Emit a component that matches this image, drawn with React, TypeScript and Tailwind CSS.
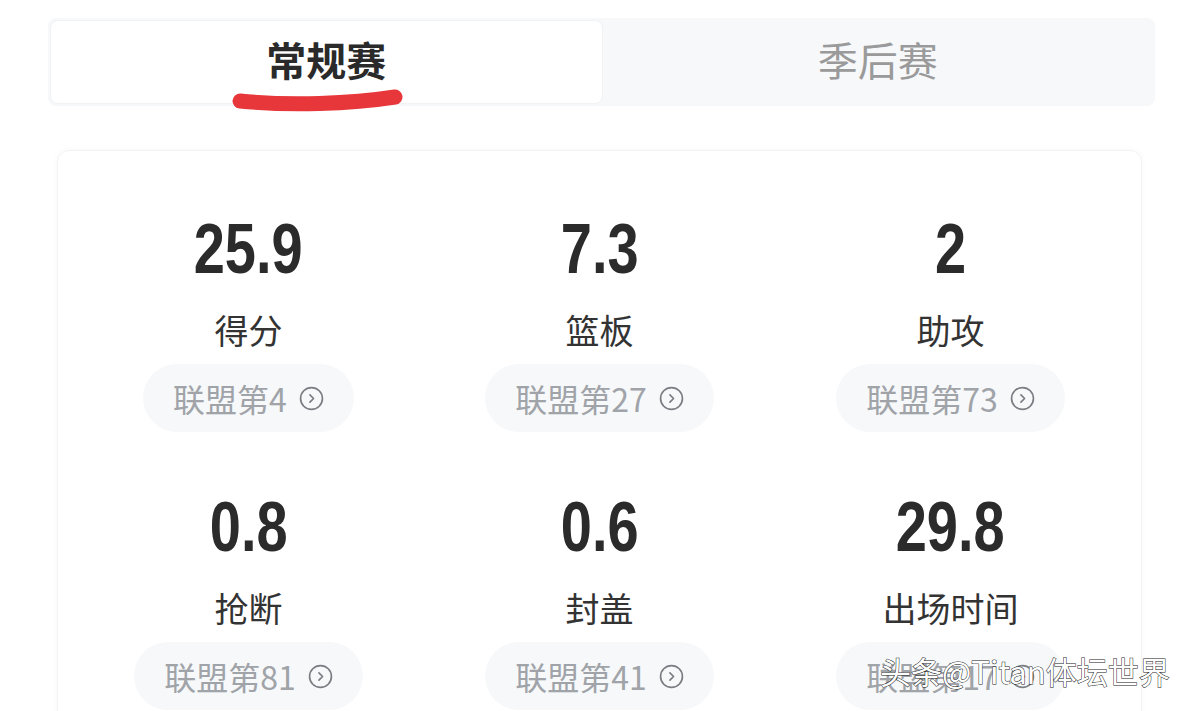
import React from "react";

type Stat = { value: string; label: string; rank: string };

const stats: Stat[] = [
  { value: "25.9", label: "得分", rank: "联盟第4" },
  { value: "7.3", label: "篮板", rank: "联盟第27" },
  { value: "2", label: "助攻", rank: "联盟第73" },
  { value: "0.8", label: "抢断", rank: "联盟第81" },
  { value: "0.6", label: "封盖", rank: "联盟第41" },
  { value: "29.8", label: "出场时间", rank: "联盟第17" },
];

const cjk = "font-['Noto_Sans_CJK_SC','Noto_Sans',sans-serif]";

function ChevronCircle() {
  return (
    <svg width="25" height="25" viewBox="0 0 24 24" fill="none" stroke="#7a7d82" strokeWidth="1.6" strokeLinecap="round" strokeLinejoin="round">
      <circle cx="12" cy="12" r="10.5" />
      <path d="M10.5 8.5 14 12l-3.5 3.5" />
    </svg>
  );
}

function StatCell({ stat }: { stat: Stat }) {
  return (
    <div className="flex flex-col items-center">
      <div className="inline-block scale-x-[0.8] font-['Liberation_Sans',sans-serif] text-[70px] font-bold leading-none text-[#2b2b2b]">
        {stat.value}
      </div>
      <div className={`${cjk} mt-[30px] text-[34px] leading-[32px] text-[#333]`}>{stat.label}</div>
      <div className="mt-[18px] flex h-[68px] items-center gap-[12px] rounded-full bg-[#f6f8fa] px-[30px]">
        <span className={`${cjk} text-[32px] leading-none text-[#a0a3a8]`}>{stat.rank}</span>
        <ChevronCircle />
      </div>
    </div>
  );
}

export default function App() {
  return (
    <div className="relative h-[711px] w-[1199px] overflow-hidden bg-white">
      <div className="px-[48px] pt-[18px]">
        <div className="relative flex h-[88px] w-[1107px] rounded-lg bg-[#f7f8fa] p-[2px]">
          <div className="flex flex-1 items-center justify-center rounded-lg border border-[#f1f2f4] bg-white pb-[6px]">
            <span className={`${cjk} text-[40px] font-bold leading-none text-[#2a2a2a]`}>常规赛</span>
          </div>
          <div className="flex flex-1 items-center justify-center pb-[6px]">
            <span className={`${cjk} text-[40px] leading-none text-[#9a9a9a]`}>季后赛</span>
          </div>
          <svg className="pointer-events-none absolute left-[184px] top-[70px]" width="180" height="34" viewBox="0 0 180 34">
            <path d="M8 13 C 58 18, 118 16, 163 9" stroke="#e8373a" strokeWidth="15" strokeLinecap="round" fill="none" />
          </svg>
        </div>
      </div>

      <div className="mx-[57px] mt-[44px] h-[600px] rounded-xl border border-[#f2f3f5] bg-white px-[15px] pt-[63px] shadow-[0_0_6px_rgba(0,0,0,0.03)]">
        <div className="grid grid-cols-3 gap-y-[60px]">
          {stats.map((s) => (
            <StatCell key={s.label} stat={s} />
          ))}
        </div>
      </div>

      <div
        className={`${cjk} absolute left-[880px] top-[655px] text-[31px] leading-none text-white [-webkit-text-stroke:1px_#222] [paint-order:stroke_fill]`}
      >
        头条@Titan体坛世界
      </div>
    </div>
  );
}
